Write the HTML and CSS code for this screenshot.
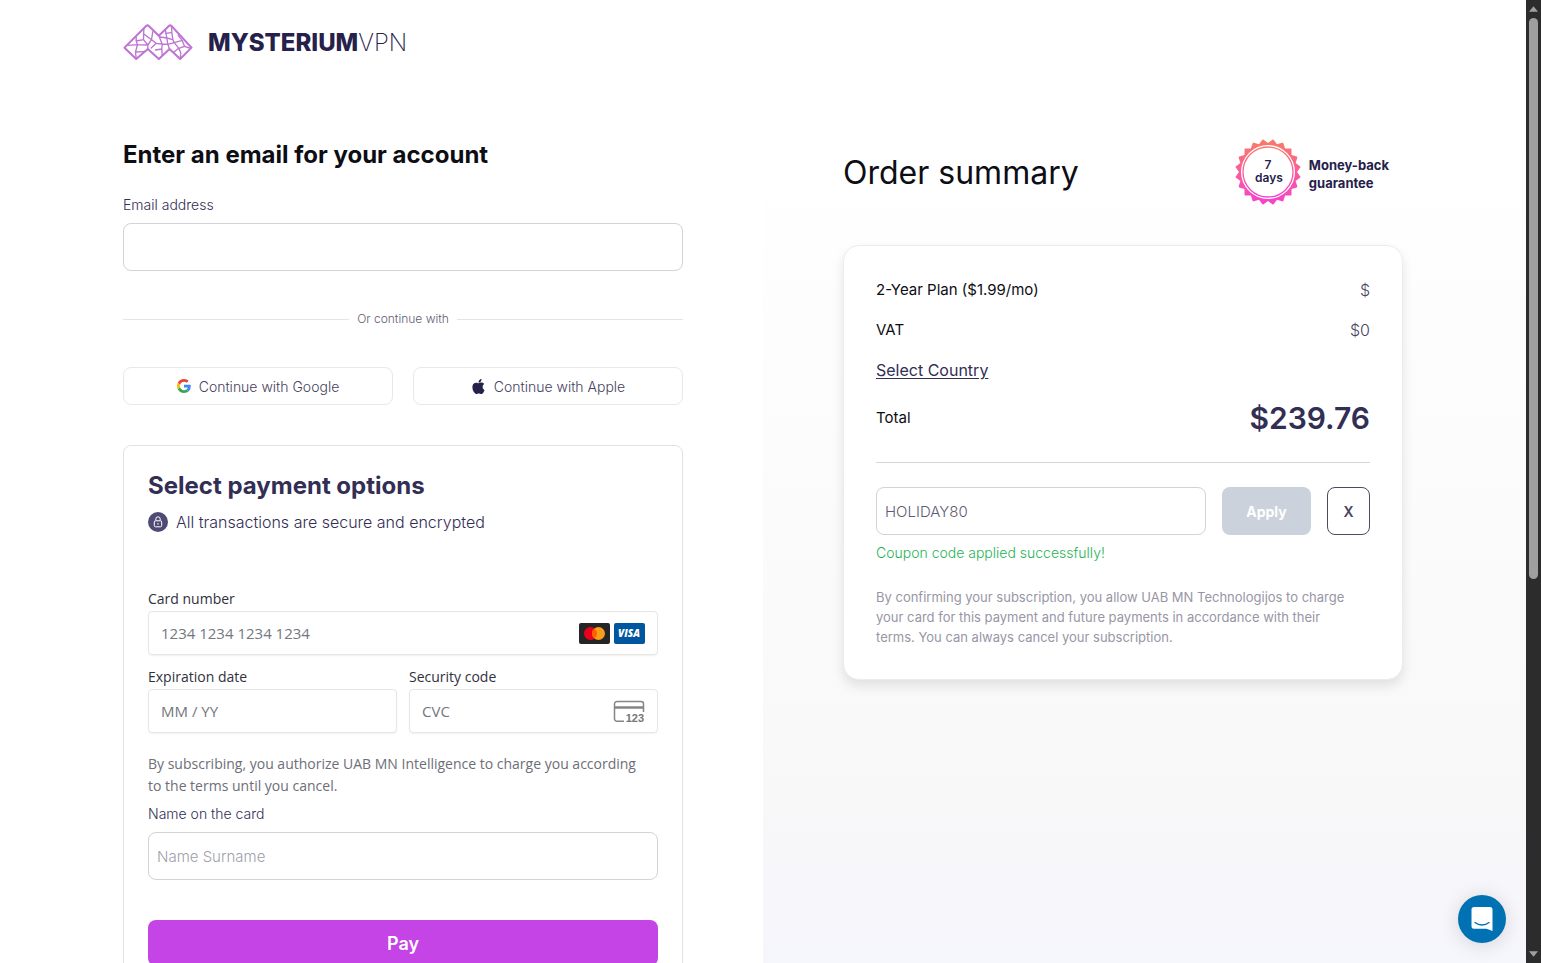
FILE: index.html
```html
<!DOCTYPE html>
<html lang="en">
<head>
    <meta charset="UTF-8">
    <meta name="viewport" content="width=device-width, initial-scale=1.0">
    <title>Checkout | Mysterium VPN</title>
    <link rel="stylesheet" href="styles.css">
</head>
<body>

    <div class="page">
        <header class="header">
            <a href="#" class="logo">
                <svg class="logo-mark" viewBox="42 41 207 108" fill="none" stroke="#bd74d2" stroke-width="4" stroke-linejoin="round" stroke-linecap="round" aria-hidden="true">
                    <path stroke-width="6" d="M45 112 L110 47 Q114 43 118 47 L148 76 L178 47 Q182 43 186 47 L246 112 L212 146 L180 116 L148 146 L115 116 L80 146 Z"/>
                    <path d="M103 54 L102 88 L80 92 M80 79 L80 92 L84 103 L56 105 M84 103 L78 125 L80 144 M84 103 L115 104 M78 125 L103 124 M102 88 L115 104 L126 88 L102 70 M126 88 L130 64 M126 88 L140 99 L125 113 M115 104 L115 116 M140 99 L158 101 L148 76 M158 101 L157 116 L138 119 M157 116 L158 134 M158 101 L175 102 L180 116 M175 102 L172 83 L152 80 M172 83 L168 60 M187 66 L186 50 M172 83 L190 88 L187 66 L168 70 M190 88 L194 97 L175 102 M194 97 L218 90 L206 75 M194 97 L208 114 L192 126 M208 114 L225 108 L218 90 M225 108 L240 113 M208 114 L214 128 L212 144"/>
                </svg>
                <span class="logo-text">MYSTERIUM<span class="logo-thin">VPN</span></span>
            </a>
        </header>

        <main class="checkout">
            <section class="account">
                <form class="column">
                    <h1 class="title">Enter an email for your account</h1>

                    <label class="label" for="email">Email address</label>
                    <input class="input" type="email" id="email">

                    <div class="divider">Or continue with</div>

                    <div class="social">
                        <button type="button" class="social-button">
                            <svg class="google-icon" viewBox="0 0 48 48" aria-hidden="true">
                                <path fill="#EA4335" d="M24 9.5c3.54 0 6.71 1.22 9.21 3.6l6.85-6.85C35.9 2.38 30.47 0 24 0 14.62 0 6.51 5.38 2.56 13.22l7.98 6.19C12.43 13.72 17.74 9.5 24 9.5z"/>
                                <path fill="#4285F4" d="M46.98 24.55c0-1.57-.15-3.09-.38-4.55H24v9.02h12.94c-.58 2.96-2.26 5.48-4.78 7.18l7.73 6c4.51-4.18 7.09-10.36 7.09-17.65z"/>
                                <path fill="#FBBC05" d="M10.53 28.59c-.48-1.45-.76-2.99-.76-4.59s.27-3.14.76-4.59l-7.98-6.19C.92 16.46 0 20.12 0 24s.92 7.54 2.56 10.78l7.97-6.19z"/>
                                <path fill="#34A853" d="M24 48c6.48 0 11.93-2.13 15.89-5.81l-7.73-6c-2.15 1.45-4.92 2.3-8.16 2.3-6.26 0-11.57-4.22-13.47-9.91l-7.98 6.19C6.51 42.62 14.62 48 24 48z"/>
                            </svg>
                            Continue with Google
                        </button>
                        <button type="button" class="social-button">
                            <svg class="apple-icon" viewBox="0 0 24 24" fill="#26214a" aria-hidden="true">
                                <path d="M12.15 6.9c-.95 0-2.42-1.08-3.96-1.04-2.04.03-3.91 1.18-4.96 3.01-2.12 3.68-.55 9.1 1.52 12.09 1.01 1.45 2.21 3.09 3.79 3.04 1.52-.07 2.09-.99 3.94-.99 1.83 0 2.35.99 3.96.95 1.64-.03 2.68-1.48 3.68-2.95 1.16-1.69 1.64-3.32 1.66-3.42-.04-.01-3.18-1.22-3.22-4.86-.03-3.04 2.48-4.49 2.6-4.56-1.43-2.09-3.62-2.32-4.39-2.38-2-.16-3.68 1.11-4.62 1.11zM15.53 3.83c.84-1.01 1.4-2.43 1.25-3.83-1.21.05-2.66.81-3.53 1.82-.78.9-1.45 2.34-1.27 3.71 1.34.1 2.71-.69 3.55-1.7"/>
                            </svg>
                            Continue with Apple
                        </button>
                    </div>

                    <div class="payment">
                        <h2 class="payment-title">Select payment options</h2>
                        <p class="secure">
                            <svg class="lock-icon" viewBox="0 0 20 20" fill="none" stroke="#fff" aria-hidden="true">
                                <circle cx="10" cy="10" r="10" fill="#4f4a75" stroke="none"/>
                                <rect x="6.3" y="8.8" width="7.4" height="6" rx="1.2"/>
                                <path d="M7.8 8.6V7a2.2 2.2 0 0 1 4.4 0v1.6M10 11v1.6"/>
                            </svg>
                            All transactions are secure and encrypted
                        </p>

                        <div class="card-fields">
                            <div class="field field-wide">
                                <label for="card-number">Card number</label>
                                <div class="card-box">
                                    <input class="card-input" type="text" id="card-number" placeholder="1234 1234 1234 1234">
                                    <svg class="brand" viewBox="0 0 31 21" aria-hidden="true">
                                        <rect width="31" height="21" rx="2" fill="#252525"/>
                                        <circle cx="11.5" cy="10.5" r="6.5" fill="#eb001b"/>
                                        <circle cx="19.5" cy="10.5" r="6.5" fill="#f79e1b"/>
                                        <path fill="#ff5f00" d="M15.5 5.4a6.5 6.5 0 0 1 0 10.2a6.5 6.5 0 0 1 0-10.2z"/>
                                    </svg>
                                    <svg class="brand" viewBox="0 0 31 21" aria-hidden="true">
                                        <rect width="31" height="21" rx="2" fill="#00579f"/>
                                        <text class="visa-text" x="15" y="14" text-anchor="middle" fill="#fff">VISA</text>
                                    </svg>
                                </div>
                            </div>
                            <div class="field">
                                <label for="expiry">Expiration date</label>
                                <div class="card-box">
                                    <input class="card-input" type="text" id="expiry" placeholder="MM / YY">
                                </div>
                            </div>
                            <div class="field">
                                <label for="cvc">Security code</label>
                                <div class="card-box">
                                    <input class="card-input" type="text" id="cvc" placeholder="CVC">
                                    <svg class="cvc-icon" viewBox="0 0 32 24" fill="none" stroke="#858585" aria-hidden="true">
                                        <path stroke-width="1.5" d="M11 22.3H4a2.5 2.5 0 0 1-2.5-2.5V5A2.5 2.5 0 0 1 4 2.5h24A2.5 2.5 0 0 1 30.5 5v8"/>
                                        <path stroke-width="2.5" d="M1.5 8.5h29"/>
                                        <text class="cvc-text" x="31" y="23" text-anchor="end" fill="#757575" stroke="none">123</text>
                                    </svg>
                                </div>
                            </div>
                        </div>

                        <p class="authorize">By subscribing, you authorize UAB MN Intelligence to charge you according to the terms until you cancel.</p>

                        <label class="label" for="card-name">Name on the card</label>
                        <input class="input" type="text" id="card-name" placeholder="Name Surname">

                        <button type="submit" class="pay-button">Pay</button>
                    </div>
                </form>
            </section>

            <section class="summary">
                <div class="column">
                    <div class="summary-head">
                        <h2 class="summary-title">Order summary</h2>
                        <div class="guarantee">
                            <svg class="badge" viewBox="-33 -33 66 66" aria-hidden="true">
                                <defs>
                                    <linearGradient id="badge-fill" x1="0" y1="0" x2="0" y2="1">
                                        <stop offset="0" stop-color="#f97c66"/>
                                        <stop offset="1" stop-color="#f73fd0"/>
                                    </linearGradient>
                                    <!-- five rotated squares give the 20 teeth -->
                                    <clipPath id="badge-shape">
                                        <rect x="-23.5" y="-23.5" width="47" height="47" rx="1"/>
                                        <rect x="-23.5" y="-23.5" width="47" height="47" rx="1" transform="rotate(18)"/>
                                        <rect x="-23.5" y="-23.5" width="47" height="47" rx="1" transform="rotate(36)"/>
                                        <rect x="-23.5" y="-23.5" width="47" height="47" rx="1" transform="rotate(54)"/>
                                        <rect x="-23.5" y="-23.5" width="47" height="47" rx="1" transform="rotate(72)"/>
                                    </clipPath>
                                </defs>
                                <rect x="-33" y="-33" width="66" height="66" fill="url(#badge-fill)" clip-path="url(#badge-shape)"/>
                                <circle r="27" fill="#fff"/>
                                <circle r="25" fill="none" stroke="url(#badge-fill)" stroke-width="1.3"/>
                                <text class="badge-text" text-anchor="middle" x="0" y="-3">7</text>
                                <text class="badge-text" text-anchor="middle" x="1" y="10">days</text>
                            </svg>
                            <p class="guarantee-text">Money-back<br>guarantee</p>
                        </div>
                    </div>

                    <div class="order">
                        <div class="row">
                            <span>2-Year Plan ($1.99/mo)</span>
                            <span class="amount">$</span>
                        </div>
                        <div class="row">
                            <span>VAT</span>
                            <span class="amount">$0</span>
                        </div>
                        <div class="row">
                            <a href="#" class="country">Select Country</a>
                        </div>
                        <div class="row row-total">
                            <span>Total</span>
                            <strong class="total">$239.76</strong>
                        </div>

                        <form class="coupon">
                            <input class="input coupon-input" type="text" aria-label="Coupon code" value="HOLIDAY80">
                            <button type="button" class="apply-button" disabled>Apply</button>
                            <button type="button" class="clear-button">X</button>
                        </form>
                        <p class="coupon-message">Coupon code applied successfully!</p>
                        <p class="terms">By confirming your subscription, you allow UAB MN Technologijos to charge your card for this payment and future payments in accordance with their terms. You can always cancel your subscription.</p>
                    </div>
                </div>
            </section>
        </main>
    </div>

    <div class="scrollbar" aria-hidden="true">
        <svg class="scroll-arrow" viewBox="0 0 10 6"><path d="M5 0l5 6H0z" fill="#a0a0a0"/></svg>
        <div class="scroll-thumb"></div>
        <svg class="scroll-arrow" viewBox="0 0 10 6"><path d="M5 6l5-6H0z" fill="#a0a0a0"/></svg>
    </div>

    <button type="button" class="chat" aria-label="Open chat">
        <svg class="chat-icon" viewBox="0 0 24 26" aria-hidden="true">
            <path fill="#fff" d="M4 1h16a2.5 2.5 0 0 1 2.5 2.5V25l-6-2.3H4a2.5 2.5 0 0 1-2.5-2.5V3.5A2.5 2.5 0 0 1 4 1z"/>
            <path fill="none" stroke="#0071b2" stroke-width="1.3" stroke-linecap="round" d="M5 16.5c4 3.3 10 3.3 14 0"/>
        </svg>
    </button>

</body>
</html>
```
FILE: styles.css
```css
* {
    box-sizing: border-box;
}

body {
    display: flex;
    height: 100vh;
    margin: 0;
    background-color: #fff;
    color: #0d0d14;
    font-family: Inter, "Liberation Sans", sans-serif;
    font-size: 15px;
}

h1, h2, p {
    margin: 0;
}

input, button {
    font-family: inherit;
}

button {
    cursor: pointer;
}

.page {
    display: flex;
    flex: 1;
    flex-direction: column;
    overflow-y: auto;
    scrollbar-width: none;
}

/* header */
.header {
    width: 100%;
    max-width: 1280px;
    margin: 0 auto;
    padding: 24px 0;
    flex-shrink: 0;
}

.logo {
    display: flex;
    align-items: center;
    gap: 15px;
    color: #26214a;
    text-decoration: none;
}

.logo-mark {
    width: 70px;
    height: 36px;
}

.logo-text {
    padding-top: 2px;
    font-size: 24px;
    font-weight: 800;
    line-height: 34px;
}

.logo-thin {
    font-weight: 200;
}

/* columns */
.checkout {
    display: grid;
    flex: 1 0 auto;
    grid-template-columns: 1fr 1fr;
}

.account,
.summary {
    padding: 55px 80px 48px;
}

.account {
    display: flex;
    justify-content: flex-end;
}

.summary {
    background: linear-gradient(#fff 0, #fff 60px, #f8f8f9 720px, #f5f5fd 900px);
}

.column {
    width: 100%;
    max-width: 560px;
}

.title {
    margin-bottom: 24px;
    font-size: 24px;
    font-weight: 700;
    line-height: 32px;
}

.label {
    display: block;
    margin-bottom: 8px;
    color: #322e54;
    font-size: 14px;
    font-weight: 300;
    line-height: 20px;
}

.input {
    display: block;
    width: 100%;
    height: 48px;
    padding: 0 8px;
    border: 1px solid #d2d2d8;
    border-radius: 8px;
    background-color: #fff;
    color: #5f5b73;
    font-size: 15px;
    font-weight: 300;
}

.input::placeholder {
    color: #a0a0aa;
}

.divider {
    display: flex;
    align-items: center;
    gap: 8px;
    margin: 40px 0;
    color: #5f5b73;
    font-size: 12px;
    font-weight: 300;
    line-height: 16px;
}

.divider::before,
.divider::after {
    content: "";
    flex: 1;
    border-top: 1px solid #e4e4e8;
}

.social {
    display: grid;
    grid-template-columns: 1fr 1fr;
    gap: 20px;
}

.social-button {
    display: flex;
    align-items: center;
    justify-content: center;
    gap: 8px;
    height: 38px;
    border: 1px solid #e8e8ec;
    border-radius: 8px;
    background-color: #fff;
    color: #464260;
    font-size: 14px;
    font-weight: 300;
}

.google-icon {
    width: 14px;
    height: 14px;
}

.apple-icon {
    width: 15px;
    height: 15px;
}

/* payment */
.payment {
    margin-top: 40px;
    padding: 24px;
    border: 1px solid #e2e2e6;
    border-radius: 8px;
}

.payment-title {
    margin-bottom: 10px;
    color: #322e54;
    font-size: 24px;
    font-weight: 700;
    line-height: 32px;
}

.secure {
    display: flex;
    align-items: center;
    gap: 8px;
    color: #322e54;
    font-size: 16px;
    font-weight: 300;
    line-height: 20px;
}

.lock-icon {
    width: 20px;
    height: 20px;
}

.card-fields {
    display: grid;
    grid-template-columns: 1fr 1fr;
    gap: 10px 12px;
    margin-top: 55px;
    color: #30313d;
    font-family: "Open Sans", "Noto Sans", sans-serif;
    font-size: 14px;
    line-height: 24px;
}

.field {
    min-width: 0;
}

.field-wide {
    grid-column: 1 / -1;
}

.card-box {
    display: flex;
    align-items: center;
    gap: 4px;
    height: 44px;
    padding: 0 12px;
    border: 1px solid #e6e6e6;
    border-radius: 4px;
    box-shadow: 0 1px 2px rgba(0, 0, 0, 0.06);
}

.card-input {
    flex: 1;
    min-width: 0;
    padding: 0;
    border: none;
    outline: none;
    background: none;
    color: #30313d;
    font-size: 15px;
}

.card-input::placeholder {
    color: #757680;
}

.brand {
    width: 31px;
    height: 21px;
}

.visa-text {
    font-family: "Open Sans", sans-serif;
    font-size: 10px;
    font-style: italic;
    font-weight: 800;
}

.cvc-icon {
    width: 32px;
    height: 24px;
}

.cvc-text {
    font-family: "Liberation Sans", sans-serif;
    font-size: 11px;
    font-weight: 700;
}

.authorize {
    margin: 20px 0 7px;
    padding-right: 8px;
    color: #6d6e78;
    font-family: "Open Sans", "Noto Sans", sans-serif;
    font-size: 14px;
    line-height: 22px;
}

.pay-button {
    width: 100%;
    height: 46px;
    margin-top: 40px;
    border: none;
    border-radius: 8px;
    background-color: #c444e6;
    color: #fff;
    font-size: 18px;
    font-weight: 600;
}

/* order summary */
.summary-head {
    display: flex;
    align-items: center;
    justify-content: space-between;
    margin-bottom: 40px;
}

.summary-title {
    font-size: 32px;
    font-weight: 400;
}

.guarantee {
    display: flex;
    align-items: center;
    gap: 8px;
    margin-right: 14px;
}

.badge {
    width: 66px;
    height: 66px;
}

.badge-text {
    fill: #26214a;
    font-size: 12px;
    font-weight: 600;
}

.guarantee-text {
    margin-top: 4px;
    color: #26214a;
    font-size: 13px;
    font-weight: 700;
    line-height: 18px;
}

.order {
    padding: 32px;
    border: 1px solid #ececef;
    border-radius: 16px;
    background-color: #fff;
    box-shadow: 0 6px 12px rgba(0, 0, 0, 0.1);
}

.row {
    display: flex;
    align-items: center;
    justify-content: space-between;
    margin-bottom: 16px;
    line-height: 24px;
}

.amount {
    color: #464260;
    font-size: 16px;
    font-weight: 300;
}

.country {
    color: #322e54;
    font-size: 16px;
    text-decoration: underline;
    text-underline-offset: 2px;
}

.row-total {
    margin-bottom: 24px;
    padding-bottom: 24px;
    border-bottom: 1px solid #d4d4da;
    line-height: 40px;
}

.total {
    color: #322e54;
    font-size: 30px;
    font-weight: 600;
}

.coupon {
    display: flex;
    gap: 16px;
}

.coupon-input {
    flex: 1;
    min-width: 0;
}

.apply-button,
.clear-button {
    height: 48px;
    border-radius: 8px;
    font-size: 14px;
}

.apply-button {
    width: 89px;
    border: none;
    background-color: #cbd2dc;
    color: #fff;
    font-weight: 700;
}

.clear-button {
    width: 43px;
    border: 1px solid #4d4a5c;
    background-color: #fff;
    color: #464260;
    font-weight: 600;
}

.coupon-message {
    margin-top: 8px;
    color: #1fb455;
    font-size: 14px;
    font-weight: 300;
    line-height: 20px;
}

.terms {
    margin-top: 24px;
    padding-right: 12px;
    color: #9896a5;
    font-size: 13px;
    line-height: 20px;
}

/* scrollbar */
.scrollbar {
    display: flex;
    flex-direction: column;
    align-items: center;
    width: 15px;
    padding: 6px 0;
    background-color: #2c2c2c;
}

.scroll-arrow {
    width: 9px;
    height: 6px;
}

.scroll-thumb {
    width: 9px;
    height: 59%;
    margin: 6px 0 auto;
    border-radius: 5px;
    background-color: #9f9f9f;
}

/* chat launcher */
.chat {
    position: fixed;
    right: 35px;
    bottom: 20px;
    display: flex;
    align-items: center;
    justify-content: center;
    width: 48px;
    height: 48px;
    border: none;
    border-radius: 50%;
    background-color: #0071b2;
    box-shadow: 0 2px 20px rgba(0, 0, 0, 0.14);
}

.chat-icon {
    width: 24px;
    height: 26px;
    flex-shrink: 0;
}
```
